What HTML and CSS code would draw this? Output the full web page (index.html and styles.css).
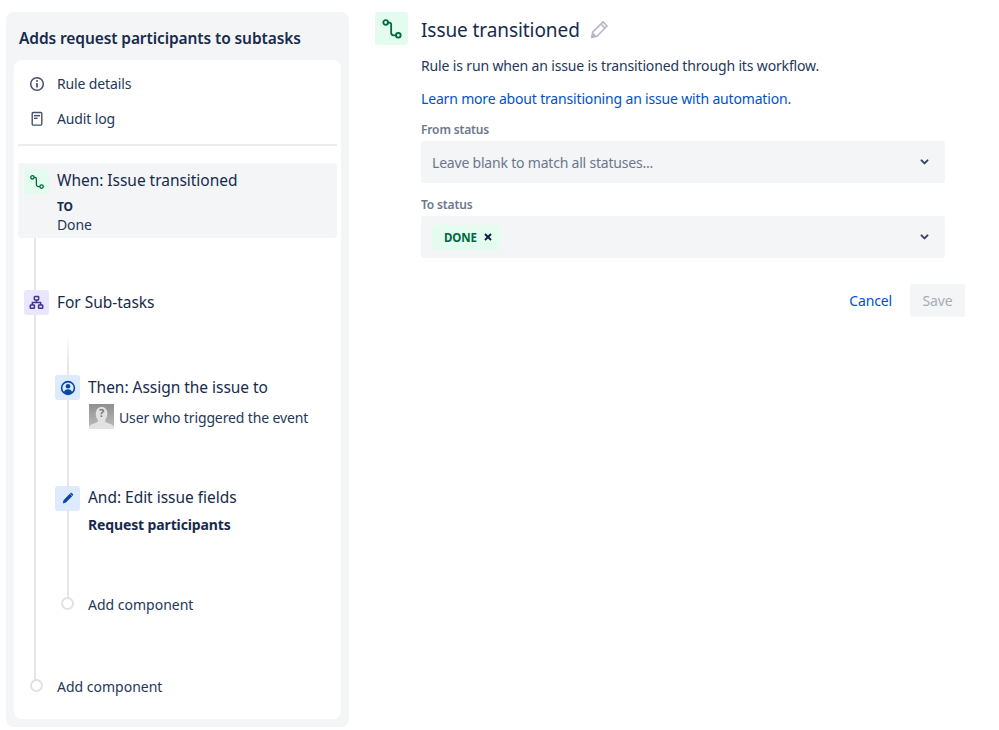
FILE: index.html
```html
<!DOCTYPE html>
<html lang="en">
<head>
<meta charset="utf-8">
<title>Issue transitioned</title>
<link rel="stylesheet" href="styles.css">
</head>
<body>
<div class="page">
  <aside class="panel">
    <h1 class="rule-title">Adds request participants to subtasks</h1>
    <div class="card">
      <div class="nav-row">
        <svg class="nav-icon" viewBox="0 0 16 16"><circle cx="8" cy="8" r="6.3" fill="none" stroke="#42526E" stroke-width="1.5"/><rect x="7.1" y="7" width="1.8" height="4.4" rx=".5" fill="#42526E"/><circle cx="8" cy="5" r="1" fill="#42526E"/></svg>
        <span>Rule details</span>
      </div>
      <div class="nav-row">
        <svg class="nav-icon" viewBox="0 0 16 16"><rect x="3.2" y="1.500" width="9.600" height="12.600" rx="1" fill="none" stroke="#42526E" stroke-width="1.400"/><rect x="5" y="4" width="6" height="1.400" fill="#42526E"/><rect x="5" y="6.600" width="3.500" height="1.400" fill="#42526E"/></svg>
        <span>Audit log</span>
      </div>
      <div class="divider"></div>
      <div class="tree">
        <div class="step step-selected">
          <span class="badge badge-green">
            <svg class="glyph" viewBox="0 0 16 16"><circle cx="3.4" cy="3.3" r="1.7" fill="none" stroke="#006644" stroke-width="1.3"/><circle cx="12.6" cy="12.6" r="1.7" fill="none" stroke="#006644" stroke-width="1.3"/><path d="M5.1 3.3h.9c1 0 1.4.6 1.4 1.5v6c0 1.2.6 1.8 1.8 1.8h1.7" fill="none" stroke="#006644" stroke-width="1.3"/></svg>
          </span>
          <div class="step-body">
            <div class="step-title">When: Issue transitioned</div>
            <div class="step-key">TO</div>
            <div class="step-value">Done</div>
          </div>
        </div>
        <div class="step step-for">
          <span class="badge badge-purple">
            <svg class="glyph glyph-tree" viewBox="0 0 16 16"><g fill="none" stroke="#403294" stroke-width="1.6"><rect x="5.7" y="1.600" width="4.600" height="3.600" rx=".6"/><rect x="1.400" y="10.600" width="4.400" height="3.600" rx=".6"/><rect x="10.200" y="10.600" width="4.400" height="3.600" rx=".6"/><path d="M8 5.200V8M3.600 10.600V8h8.800v2.600"/></g></svg>
          </span>
          <div class="step-title">For Sub-tasks</div>
        </div>
        <div class="nested">
          <div class="step step-then">
            <span class="badge badge-blue">
              <svg class="glyph" viewBox="0 0 16 16"><circle cx="8" cy="8" r="6.4" fill="none" stroke="#0747A6" stroke-width="1.6"/><circle cx="8" cy="6.2" r="2.3" fill="#0747A6"/><path d="M3.8 12.2c.6-2 2.2-3 4.2-3s3.600 1 4.200 3c-1 1.300-2.500 2-4.200 2s-3.200-.7-4.200-2z" fill="#0747A6"/></svg>
            </span>
            <div class="step-body">
              <div class="step-title">Then: Assign the issue to</div>
              <div class="assignee">
                <svg class="avatar" viewBox="0 0 25 25"><defs><linearGradient id="avatar-bg" x1="0" y1="0" x2="0" y2="1"><stop offset="0" stop-color="#8f8f8f"/><stop offset="1" stop-color="#bdbdbd"/></linearGradient></defs><rect width="25" height="25" fill="url(#avatar-bg)"/><path d="M0 25v-2c1-3 6-3.500 8.500-5 .5-1 .4-1.800 0-2.600C7 13.500 6.500 11 6.800 8.500 7.300 5 9.500 3 12.500 3s5.500 2 5.800 5.500c.2 2.500-.4 5-1.800 6.900-.4.8-.5 1.600 0 2.600 2.500 1.500 7.500 2 8.500 5v2z" fill="#e2e2e2"/><text class="avatar-mark" x="12.500" y="12.500" text-anchor="middle">?</text></svg>
                <span>User who triggered the event</span>
              </div>
            </div>
          </div>
          <div class="step step-and">
            <span class="badge badge-blue">
              <svg class="glyph glyph-pen" viewBox="0 0 16 16"><path d="M10.800 2.200l3 3-7.800 7.800-3.800 1 .9-3.900zM11.600 1.400c.5-.5 1.300-.5 1.800 0l1.200 1.200c.5.5.5 1.300 0 1.800l-.4.400-3-3z" fill="#0747A6"/></svg>
            </span>
            <div class="step-body">
              <div class="step-title">And: Edit issue fields</div>
              <div class="step-strong">Request participants</div>
            </div>
          </div>
          <div class="step add-row add-inner">
            <span class="add-slot"><span class="add-dot"></span></span>
            <span class="add-label">Add component</span>
          </div>
        </div>
        <div class="step add-row add-outer">
          <span class="add-slot"><span class="add-dot"></span></span>
          <span class="add-label">Add component</span>
        </div>
      </div>
    </div>
  </aside>

  <main class="main">
    <header class="head">
      <span class="head-badge">
        <svg class="head-glyph" viewBox="0 0 16 16"><circle cx="3.400" cy="3.300" r="1.700" fill="none" stroke="#006644" stroke-width="1.300"/><circle cx="12.600" cy="12.600" r="1.700" fill="none" stroke="#006644" stroke-width="1.300"/><path d="M5.100 3.300h.9c1 0 1.400.6 1.400 1.500v6c0 1.200.6 1.800 1.800 1.800h1.700" fill="none" stroke="#006644" stroke-width="1.300"/></svg>
      </span>
      <h2 class="head-title">Issue transitioned</h2>
      <svg class="pencil" viewBox="0 0 18 18"><g fill="none" stroke="#B3B9C4" stroke-width="1.500" stroke-linejoin="round"><path d="M12.300 1.800l3.900 3.900L6.500 15.400l-5 1.100 1.100-5z"/><path d="M10.300 3.800l3.900 3.900"/></g><path d="M1.500 16.500l1.100-5 3.900 3.900z" fill="#B3B9C4"/></svg>
    </header>
    <form class="form">
      <p class="desc">Rule is run when an issue is transitioned through its workflow.</p>
      <a class="learn" href="#">Learn more about transitioning an issue with automation.</a>
      <label class="label label-from">From status</label>
      <div class="select">
        <span class="placeholder">Leave blank to match all statuses...</span>
        <svg class="chevron" viewBox="0 0 12 8"><path d="M2 1.800l4 4 4-4" fill="none" stroke="#344563" stroke-width="2.600" stroke-linecap="round" stroke-linejoin="round"/></svg>
      </div>
      <label class="label label-to">To status</label>
      <div class="select">
        <span class="tag"><span class="tag-text">DONE</span><svg class="tag-x" viewBox="0 0 8 8"><path d="M1 1l6 6M7 1l-6 6" fill="none" stroke="#091E42" stroke-width="1.900"/></svg></span>
        <svg class="chevron" viewBox="0 0 12 8"><path d="M2 1.800l4 4 4-4" fill="none" stroke="#344563" stroke-width="2.600" stroke-linecap="round" stroke-linejoin="round"/></svg>
      </div>
      <div class="actions">
        <a class="cancel" href="#">Cancel</a>
        <span class="save">Save</span>
      </div>
    </form>
  </main>
</div>
</body>
</html>
```
FILE: styles.css
```css
* { box-sizing: border-box; }
html, body { margin: 0; padding: 0; background: #fff; }
body {
  font-family: "Noto Sans", "Open Sans", "Liberation Sans", sans-serif;
  color: #172B4D;
  font-size: 14px;
  letter-spacing: -0.13px;
}
.page { display: flex; align-items: flex-start; width: 999px; height: 730px; overflow: hidden; padding: 12px 0 0 6px; }

/* left panel */
.panel { width: 343px; height: 715px; flex: none; background: #F4F5F7; border-radius: 8px; padding: 0 8px 8px; display: flex; flex-direction: column; }
.rule-title { margin: 0; height: 48px; padding: 13px 0 0 5px; font-size: 15.5px; line-height: 26px; font-weight: 600; letter-spacing: -0.1px; color: #172B4D; white-space: nowrap; }
.card { flex: 1; background: #fff; border-radius: 8px; padding-top: 6px; }
.nav-row { height: 35px; display: flex; align-items: center; padding-left: 15px; gap: 12px; font-size: 14px; color: #253858; }
.nav-icon { width: 16px; height: 16px; flex: none; }
.divider { height: 2px; margin: 8px 4px 17px; background: #EBECF0; }

/* tree */
.tree { position: relative; margin: 0 4px; }
.tree::before { content: ""; position: absolute; left: 16px; top: 31px; width: 2px; height: 486px; background: #E4E6EC; }
.step { position: relative; display: flex; gap: 8px; padding-left: 6px; }
.step-selected { height: 75px; padding-top: 6px; background: #F4F5F7; border-radius: 4px; }
.badge { position: relative; flex: none; width: 25px; height: 25px; border-radius: 3px; display: flex; align-items: center; justify-content: center; }
.badge-green { background: #E3FCEF; }
.badge-purple { background: #EAE6FF; }
.badge-blue { background: #DEEBFF; }
.glyph { width: 16px; height: 16px; }
.glyph-tree { width: 15px; height: 15px; }
.glyph-pen { width: 13px; height: 13px; }
.step-title { font-size: 15.5px; line-height: 24px; letter-spacing: -0.03px; color: #172B4D; white-space: nowrap; }
.step-selected .step-title, .step-and .step-title { margin: -1px 0 1px; }
.step-key { margin-top: 5px; font-size: 12px; line-height: 19px; font-weight: 700; color: #172B4D; }
.step-value { font-size: 14px; line-height: 18px; color: #253858; }
.step-for { margin-top: 52px; }
.nested { position: relative; margin-left: 31px; }
.nested::before { content: ""; position: absolute; left: 18px; top: -40px; width: 2px; height: 265px; background: linear-gradient(#fff, #E4E6EC 30px); }
.step-then { margin-top: 60px; }
.assignee { display: flex; align-items: center; gap: 5px; height: 25px; margin: 5px 0 0 1px; padding-top: 1px; font-size: 14px; color: #253858; white-space: nowrap; }
.avatar { width: 25px; height: 25px; flex: none; margin-top: -1px; }
.avatar-mark { font-size: 11px; font-weight: 700; fill: #777; }
.step-and { margin-top: 57px; }
.step-strong { margin-top: 6px; font-size: 14px; line-height: 20px; font-weight: 700; color: #172B4D; white-space: nowrap; }
.add-row { height: 25px; align-items: center; }
.add-inner { margin-top: 56px; }
.add-outer { margin-top: 57px; }
.add-slot { flex: none; width: 25px; height: 25px; display: flex; align-items: center; justify-content: center; }
.add-dot { position: relative; width: 13px; height: 13px; background: #fff; border: 2.500px solid #DFE1E6; border-radius: 50%; }
.add-label { padding-top: 1px; font-size: 14px; letter-spacing: 0; color: #253858; }

/* main */
.main { width: 590px; flex: none; margin-left: 26px; }
.head { display: flex; align-items: center; height: 33px; }
.head-badge { flex: none; width: 33px; height: 33px; margin-right: 13px; background: #E3FCEF; border-radius: 3px; display: flex; align-items: center; justify-content: center; }
.head-glyph { width: 22px; height: 22px; }
.head-title { margin: 3px 10px 0 0; font-size: 19px; line-height: 33px; font-weight: 400; letter-spacing: -0.08px; color: #172B4D; white-space: nowrap; }
.pencil { width: 19px; height: 19px; margin-top: 2px; }
.form { display: flex; flex-direction: column; padding: 0 20px 0 46px; }
.desc { margin: 10px 0 0; padding-top: 1px; font-size: 14px; line-height: 20px; letter-spacing: -0.15px; color: #253858; white-space: nowrap; }
.learn { margin-top: 13px; font-size: 14px; line-height: 20px; letter-spacing: -0.17px; color: #0052CC; text-decoration: none; white-space: nowrap; }
.label { font-size: 12px; line-height: 16px; font-weight: 600; letter-spacing: -0.15px; color: #6B778C; }
.label-from { margin-top: 13px; margin-bottom: 3px; }
.label-to { margin-top: 14px; margin-bottom: 3px; }
.select { height: 42px; background: #F4F5F7; border-radius: 3px; display: flex; align-items: center; justify-content: space-between; padding: 0 16px 0 11px; }
.placeholder { padding-top: 1px; font-size: 14px; letter-spacing: -0.2px; color: #6B778C; }
.chevron { width: 9px; height: 6px; }
.tag { display: flex; align-items: center; height: 25px; width: 68px; background: #E3FCEF; border-radius: 3px; padding-left: 12px; }
.tag-text { font-size: 11.5px; font-weight: 700; color: #006644; }
.tag-x { width: 8px; height: 8px; margin-left: 7px; }
.actions { display: flex; justify-content: flex-end; align-items: center; gap: 18px; margin: 26px -20px 0 0; }
.cancel { font-size: 14px; color: #0052CC; text-decoration: none; }
.save { width: 55px; height: 33px; background: #F4F5F7; border-radius: 3px; display: flex; align-items: center; justify-content: center; font-size: 14px; color: #A5ADBA; }
```
